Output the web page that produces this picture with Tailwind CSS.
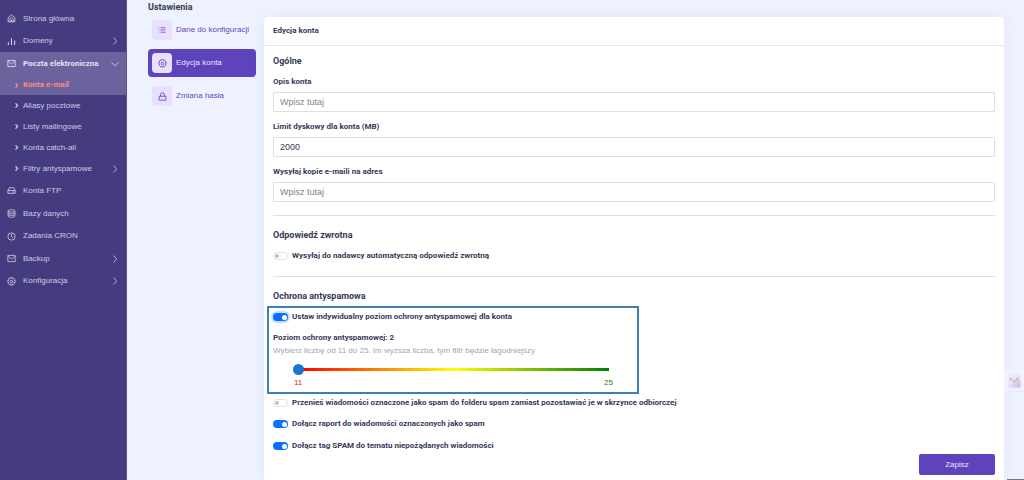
<!DOCTYPE html>
<html lang="pl">
<head>
    <meta charset="UTF-8" />
    <meta name="viewport" content="width=device-width, initial-scale=1" />
    <title>Edycja konta</title>
    <script src="https://cdn.jsdelivr.net/npm/@tailwindcss/browser@4"></script>
</head>
<body class="bg-[#eef2ff] font-['Liberation_Sans',Arial,sans-serif] text-[8px] leading-3 text-[#343a55] h-screen flex overflow-hidden">

    <svg class="hidden" xmlns="http://www.w3.org/2000/svg">
        <symbol id="icon-home" viewBox="0 0 16 16"><path d="M2 6.500 8 1.500l6 5V14H2zM5 14V9.500a3 3 0 0 1 6 0V14M7.500 14v-3.500h1V14" /></symbol>
        <symbol id="icon-bars" viewBox="0 0 16 16"><path d="M2.500 9.500v4.500M8 2v12M13.500 6v8" /></symbol>
        <symbol id="icon-mail" viewBox="0 0 16 16"><path d="M1.500 2.500h13v11h-13zM2 4l6 5 6-5" /></symbol>
        <symbol id="icon-drive" viewBox="0 0 16 16"><path d="M1.500 8 4 3h8l2.500 5v5h-13zM1.500 8h13M9.500 10.600h3M3.500 10.600h1" /></symbol>
        <symbol id="icon-database" viewBox="0 0 16 16"><path d="M2 3.500c0-3 12-3 12 0v9c0 3-12 3-12 0zM2 3.500c0 2.600 12 2.600 12 0M2 6.500c0 2.600 12 2.600 12 0M2 9.500c0 2.600 12 2.600 12 0" /></symbol>
        <symbol id="icon-clock" viewBox="0 0 16 16"><circle cx="8" cy="8" r="6.500" /><path d="M8 3.500V8l3 2" /></symbol>
        <symbol id="icon-gear" viewBox="0 0 16 16"><path d="M6.600 1h2.800l.5 1.900 1.700-1 2 2-1 1.800 1.900.6v2.900l-1.900.5 1 1.800-2 2-1.700-1-.5 2H6.600l-.5-2-1.800 1-2-2 1-1.800-1.900-.5V6.300l1.900-.6-1-1.800 2-2 1.800 1z" /><circle cx="8" cy="8" r="2.200" /></symbol>
        <symbol id="icon-list" viewBox="0 0 16 16"><path d="M5 3.500h10M5 8h10M5 12.500h10M1 3.500h1.500M1 8h1.500M1 12.500h1.500" /></symbol>
        <symbol id="icon-lock" viewBox="0 0 16 16"><path d="M2 7.500h12v7H2zM4.500 7.500V5a3.500 3.500 0 0 1 7 0v2.500" /></symbol>
        <symbol id="icon-right" viewBox="0 0 16 16"><path d="m5 1 6.500 7L5 15" /></symbol>
        <symbol id="icon-down" viewBox="0 0 16 16"><path d="m1 5 7 6.500L15 5" /></symbol>
    </svg>

    <aside class="w-[127px] shrink-0 bg-[#453c80] text-[#cdcae0] border-r border-[#5d5596]">
        <nav class="pt-[7px]" aria-label="Menu">
            <a href="#" class="flex items-center h-[23px] pl-[7px] pr-[7px]">
                <svg class="size-[9px] mr-[7px] fill-none stroke-current stroke-[1.5]"><use href="#icon-home" /></svg>Strona główna
            </a>
            <a href="#" class="flex items-center h-[22px] pl-[7px] pr-[7px]">
                <svg class="size-[9px] mr-[7px] fill-none stroke-current stroke-2"><use href="#icon-bars" /></svg>Domeny
                <svg class="size-2 ml-auto fill-none stroke-current stroke-[1.5]"><use href="#icon-right" /></svg>
            </a>
            <div class="bg-[#6b639e] font-[Roboto,'Liberation_Sans',sans-serif]">
                <a href="#" class="flex items-center h-[23px] pl-[7px] pr-[7px] font-bold text-[#e4e2f0]">
                    <svg class="size-[9px] mr-[7px] fill-none stroke-current stroke-[1.5]"><use href="#icon-mail" /></svg>Poczta elektroniczna
                    <svg class="size-2 ml-auto fill-none stroke-current stroke-[1.5]"><use href="#icon-down" /></svg>
                </a>
                <a href="#" class="flex items-center h-5 pl-[14px] font-bold text-[#ff8a80]">
                    <svg class="size-[5px] mr-1 fill-none stroke-current stroke-4"><use href="#icon-right" /></svg>Konta e-mail
                </a>
            </div>
            <a href="#" class="flex items-center h-[21px] pl-[14px]">
                <svg class="size-[5px] mr-1 fill-none stroke-current stroke-4"><use href="#icon-right" /></svg>Aliasy pocztowe
            </a>
            <a href="#" class="flex items-center h-[21px] pl-[14px]">
                <svg class="size-[5px] mr-1 fill-none stroke-current stroke-4"><use href="#icon-right" /></svg>Listy mailingowe
            </a>
            <a href="#" class="flex items-center h-[21px] pl-[14px]">
                <svg class="size-[5px] mr-1 fill-none stroke-current stroke-4"><use href="#icon-right" /></svg>Konta catch-all
            </a>
            <a href="#" class="flex items-center h-[21px] pl-[14px] pr-[7px]">
                <svg class="size-[5px] mr-1 fill-none stroke-current stroke-4"><use href="#icon-right" /></svg>Filtry antyspamowe
                <svg class="size-2 ml-auto fill-none stroke-current stroke-[1.5]"><use href="#icon-right" /></svg>
            </a>
            <a href="#" class="flex items-center h-[23px] pl-[7px] pr-[7px]">
                <svg class="size-[9px] mr-[7px] fill-none stroke-current stroke-[1.5]"><use href="#icon-drive" /></svg>Konta FTP
            </a>
            <a href="#" class="flex items-center h-[23px] pl-[7px] pr-[7px]">
                <svg class="size-[9px] mr-[7px] fill-none stroke-current stroke-[1.5]"><use href="#icon-database" /></svg>Bazy danych
            </a>
            <a href="#" class="flex items-center h-[22px] pl-[7px] pr-[7px]">
                <svg class="size-[9px] mr-[7px] fill-none stroke-current stroke-[1.5]"><use href="#icon-clock" /></svg>Zadania CRON
            </a>
            <a href="#" class="flex items-center h-[23px] pl-[7px] pr-[7px]">
                <svg class="size-[9px] mr-[7px] fill-none stroke-current stroke-[1.5]"><use href="#icon-mail" /></svg>Backup
                <svg class="size-2 ml-auto fill-none stroke-current stroke-[1.5]"><use href="#icon-right" /></svg>
            </a>
            <a href="#" class="flex items-center h-[22px] pl-[7px] pr-[7px]">
                <svg class="size-[9px] mr-[7px] fill-none stroke-current stroke-[1.5]"><use href="#icon-gear" /></svg>Konfiguracja
                <svg class="size-2 ml-auto fill-none stroke-current stroke-[1.5]"><use href="#icon-right" /></svg>
            </a>
        </nav>
    </aside>

    <main class="flex-1 min-w-0 flex gap-2 pl-[21px] pr-5">

        <section class="w-[108px] shrink-0 pt-[1px] text-[#6446c0]">
            <h1 class="text-[9px] font-bold text-[#343a55] font-[Roboto,'Liberation_Sans',sans-serif]">Ustawienia</h1>
            <nav class="mt-[3px] flex flex-col gap-[5px]" aria-label="Ustawienia">
                <a href="#" class="flex items-center gap-1 h-7 px-1 rounded-sm whitespace-nowrap">
                    <span class="size-5 shrink-0 rounded-sm bg-[#e8e0fd] flex items-center justify-center"><svg class="size-2 fill-none stroke-current stroke-[1.5]"><use href="#icon-list" /></svg></span>
                    Dane do konfiguracji
                </a>
                <a href="#" class="flex items-center gap-1 h-7 px-1 rounded-sm whitespace-nowrap bg-[#5f43bd] text-[#e9e4fa]">
                    <span class="size-5 shrink-0 rounded-sm bg-[#e8e0fd] text-[#6446c0] flex items-center justify-center"><svg class="size-[9px] fill-none stroke-current stroke-[1.5]"><use href="#icon-gear" /></svg></span>
                    Edycja konta
                </a>
                <a href="#" class="flex items-center gap-1 h-7 px-1 rounded-sm whitespace-nowrap">
                    <span class="size-5 shrink-0 rounded-sm bg-[#e8e0fd] flex items-center justify-center"><svg class="size-[9px] fill-none stroke-current stroke-[1.5]"><use href="#icon-lock" /></svg></span>
                    Zmiana hasła
                </a>
            </nav>
        </section>

        <section class="flex-1 min-w-0 mt-[17px] bg-white rounded-t-sm shadow-[0_0_14px_rgba(80,90,170,0.08)] font-[Roboto,'Liberation_Sans',sans-serif]">
            <h2 class="h-7 px-[9px] flex items-center font-bold">Edycja konta</h2>
            <form class="border-t border-[#e9e9ec] px-[9px] pt-[9px] font-bold">
                <h3 class="text-[9px]">Ogólne</h3>

                <div class="mt-[9px]">
                    <label for="description" class="block">Opis konta</label>
                    <input type="text" id="description" placeholder="Wpisz tutaj" class="mt-1 block w-full h-5 px-1.5 border border-[#dedfe2] rounded-[1px] font-['Liberation_Sans',Arial,sans-serif] font-normal text-[9px] placeholder:text-[#7d848c]" />
                </div>
                <div class="mt-[9px]">
                    <label for="limit" class="block">Limit dyskowy dla konta (MB)</label>
                    <input type="text" id="limit" value="2000" class="mt-1 block w-full h-5 px-1.5 border border-[#dedfe2] rounded-[1px] font-['Liberation_Sans',Arial,sans-serif] font-normal text-[9px]" />
                </div>
                <div class="mt-[9px]">
                    <label for="copy" class="block">Wysyłaj kopie e-maili na adres</label>
                    <input type="text" id="copy" placeholder="Wpisz tutaj" class="mt-1 block w-full h-5 px-1.5 border border-[#dedfe2] rounded-[1px] font-['Liberation_Sans',Arial,sans-serif] font-normal text-[9px] placeholder:text-[#7d848c]" />
                </div>

                <hr class="mt-[13px] border-[#dddee0]" />
                <h3 class="mt-[13px] text-[9px]">Odpowiedź zwrotna</h3>
                <label class="mt-[9px] flex items-center gap-1">
                    <input type="checkbox" class="appearance-none w-[15px] h-2 rounded-full border border-[#e2e2e2] flex items-center before:size-1 before:ml-px before:rounded-full before:bg-[#bfbfbf]" />
                    Wysyłaj do nadawcy automatyczną odpowiedź zwrotną
                </label>

                <hr class="mt-[14px] border-[#dddee0]" />
                <h3 class="mt-[13px] text-[9px]">Ochrona antyspamowa</h3>

                <div class="mt-1 -ml-1.5 w-[372px] border-2 border-[#3f7fb8] px-1 py-[3px]">
                    <label class="flex items-center gap-1">
                        <input type="checkbox" checked class="appearance-none w-[15px] h-2 rounded-full bg-[#0d6efd] ring-2 ring-[#c2dbfe] flex items-center justify-end before:size-[5px] before:mr-px before:rounded-full before:bg-white" />
                        Ustaw indywidualny poziom ochrony antyspamowej dla konta
                    </label>
                    <label for="level" class="block mt-[9px]">Poziom ochrony antyspamowej: 2</label>
                    <p class="mt-px font-['Liberation_Sans',Arial,sans-serif] font-normal text-[#a0a5ae]">Wybierz liczbę od 11 do 25. Im wyższa liczba, tym filtr będzie łagodniejszy</p>
                    <div class="ml-5 w-[321px] mt-1.5 font-['Liberation_Sans',Arial,sans-serif] font-normal">
                        <input type="range" id="level" min="11" max="25" value="11"
                            class="appearance-none block w-full h-3 bg-[linear-gradient(to_right,red,yellow,green)] bg-[length:310px_3px] bg-center bg-no-repeat [&::-webkit-slider-thumb]:appearance-none [&::-webkit-slider-thumb]:size-[11px] [&::-webkit-slider-thumb]:rounded-full [&::-webkit-slider-thumb]:bg-[#1976d2]" />
                        <div class="mt-[2px] flex justify-between px-[1px]">
                            <span class="text-[#f01414]">11</span>
                            <span class="text-[#168a16]">25</span>
                        </div>
                    </div>
                </div>

                <label class="mt-[3px] flex items-center gap-1">
                    <input type="checkbox" class="appearance-none w-[15px] h-2 rounded-full border border-[#e2e2e2] flex items-center before:size-1 before:ml-px before:rounded-full before:bg-[#bfbfbf]" />
                    Przenieś wiadomości oznaczone jako spam do folderu spam zamiast pozostawiać je w skrzynce odbiorczej
                </label>
                <label class="mt-[9px] flex items-center gap-1">
                    <input type="checkbox" checked class="appearance-none w-[15px] h-2 rounded-full bg-[#0d6efd] flex items-center justify-end before:size-[5px] before:mr-px before:rounded-full before:bg-white" />
                    Dołącz raport do wiadomości oznaczonych jako spam
                </label>
                <label class="mt-[10px] flex items-center gap-1">
                    <input type="checkbox" checked class="appearance-none w-[15px] h-2 rounded-full bg-[#0d6efd] flex items-center justify-end before:size-[5px] before:mr-px before:rounded-full before:bg-white" />
                    Dołącz tag SPAM do tematu niepożądanych wiadomości
                </label>
                <div class="mt-[2px] flex justify-end">
                    <button type="submit" class="w-[76px] h-[21px] rounded-xs bg-[#5f43bd] text-[#e9e4fa] font-['Liberation_Sans',Arial,sans-serif] font-normal">Zapisz</button>
                </div>
            </form>
        </section>
    </main>

    <button type="button" aria-label="Pomoc" class="absolute right-0 top-[370px] w-5 h-[22px] pl-[3px] bg-[#f0f3ff] border-b border-[#e6e9f6]">
        <svg class="w-[14px] h-[14px]" viewBox="0 0 14 14" fill="none">
            <defs>
                <linearGradient id="face" x1="0" y1="0" x2="1" y2="1"><stop offset=".4" stop-color="#ece9f4" /><stop offset="1" stop-color="#cdaef0" /></linearGradient>
            </defs>
            <rect width="13" height="13" x=".5" y=".5" rx="1" fill="url(#face)" />
            <path d="m3 4 1.500 1.300L3 6.500M10.800 4 9.300 5.300l1.500 1.200M5.500 7h3" stroke="#8a8a9c" stroke-width=".8" />
        </svg>
    </button>
    <div class="absolute right-0 bottom-0 w-[17px] h-px bg-[#77797f]"></div>

</body>
</html>
